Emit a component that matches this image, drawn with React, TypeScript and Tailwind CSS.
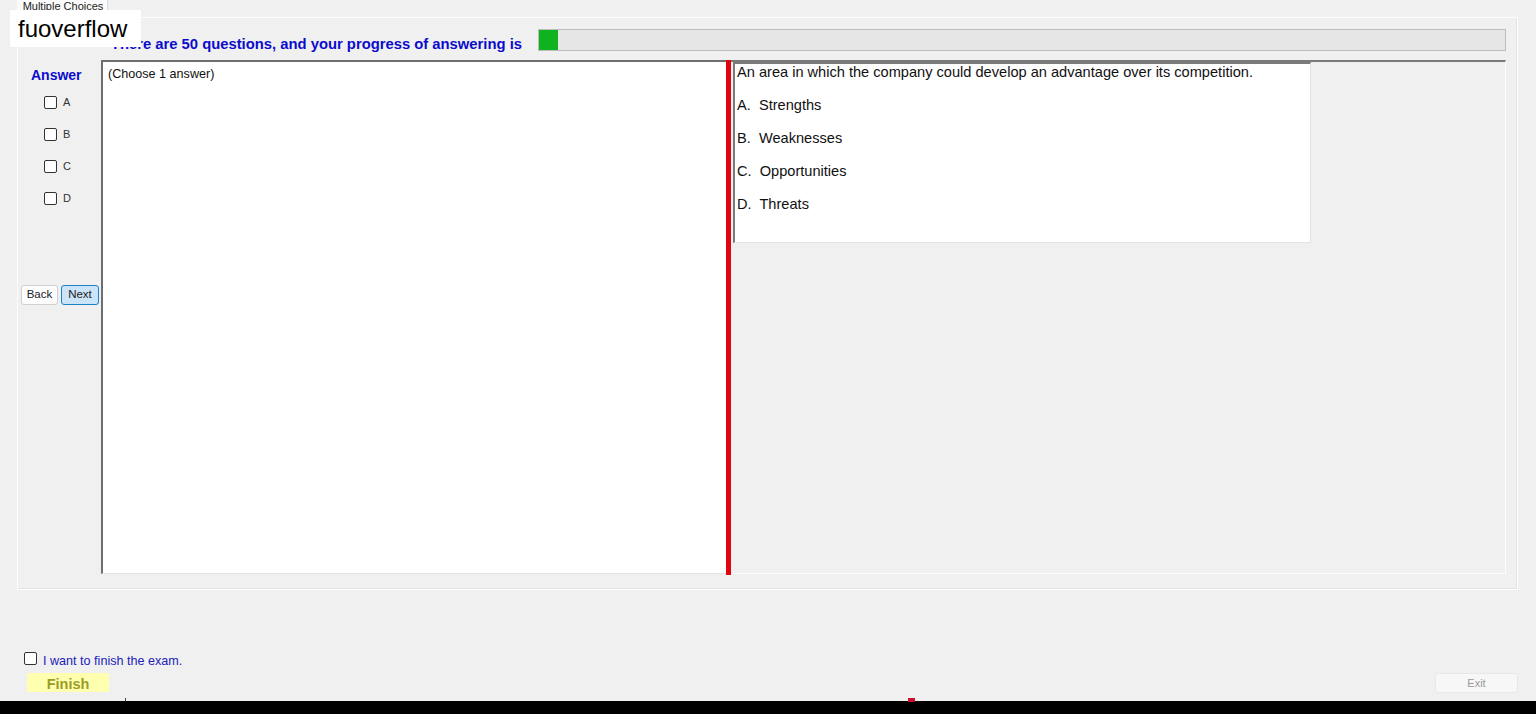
import React from 'react';

const options = [
  { key: 'A', text: 'Strengths' },
  { key: 'B', text: 'Weaknesses' },
  { key: 'C', text: 'Opportunities' },
  { key: 'D', text: 'Threats' },
];

// Plain Win-forms style checkbox box
const Box = () => (
  <span className="inline-block h-[13px] w-[13px] shrink-0 rounded-[2px] border border-[#333333] bg-white" />
);

const App: React.FC = () => {
  return (
    <div
      className="relative flex h-[714px] w-[1536px] flex-col overflow-hidden bg-[#f0f0f0] text-black"
      style={{ fontFamily: '"Liberation Sans", Arial, sans-serif' }}
    >
      {/* tab header */}
      <div className="ml-[17px] flex h-[17px] w-[91px] items-start justify-center border-r border-[#d9d9d9] bg-[#fbfbfb] pl-[2px] text-[11px] leading-[13px] text-[#222]">
        Multiple Choices
      </div>

      {/* tab page */}
      <div className="ml-[17px] flex h-[573px] w-[1501px] flex-col border border-[#fdfdfd] shadow-[inset_-1px_-1px_0_#e3e3e3]">
        {/* progress header */}
        <div className="mt-[11px] flex h-[22px] items-end">
          <div className="w-[520px] whitespace-nowrap pr-[16px] text-right text-[14.8px] font-bold leading-[14px] text-[#0c0ccc]">
            There are 50 questions, and your progress of answering is
          </div>
          <div className="flex h-[22px] w-[968px] border border-[#bcbcbc] bg-[#e6e6e6]">
            <div className="h-full w-[19px] bg-[#0fb21f]" />
          </div>
        </div>

        {/* content */}
        <div className="mt-[9px] flex h-[514px]">
          {/* answer column */}
          <div className="ml-[3px] flex w-[80px] flex-col">
            <div className="ml-[10px] mt-[7px] text-[14px] font-bold leading-[16px] text-[#0c0ccc]">Answer</div>
            <div className="ml-[23px] mt-[13px] flex flex-col gap-[19px]">
              {options.map((o) => (
                <div key={o.key} className="flex h-[13px] items-center gap-[6px] text-[11px] text-[#333]">
                  <Box />
                  <span>{o.key}</span>
                </div>
              ))}
            </div>
            <div className="mt-[80px] flex gap-[3px]">
              <button className="h-[20px] w-[37px] rounded-[3px] border border-[#d0d0d0] bg-[#fdfdfd] text-[11.5px] text-[#222]">
                Back
              </button>
              <button className="h-[20px] w-[38px] rounded-[3px] border border-[#1c7fc8] bg-[#cce4f7] text-[11.5px] text-[#222]">
                Next
              </button>
            </div>
          </div>

          {/* answer text box */}
          <div className="h-[514px] w-[625px] border-l-2 border-t-2 border-b border-l-[#6e6e6e] border-t-[#6e6e6e] border-b-[#e3e3e3] bg-white pl-[5px] pt-[5px] text-[12.6px] leading-[14px] text-[#111]">
            (Choose 1 answer)
          </div>

          {/* splitter */}
          <div className="h-[515px] w-[5px] bg-[#e0060e]" />

          {/* question panel */}
          <div className="flex h-[514px] w-[775px] flex-col border-t-2 border-r border-b border-t-[#7a7a7a] border-r-[#fdfdfd] border-b-[#fdfdfd]">
            <div className="ml-[2px] h-[181px] w-[578px] border-l-2 border-t-2 border-r border-b border-l-[#7a7a7a] border-t-[#7a7a7a] border-r-[#e3e3e3] border-b-[#e3e3e3] bg-white pl-[2px] text-[14.6px] leading-[17px] text-[#111]">
              <div>An area in which the company could develop an advantage over its competition.</div>
              <div className="mt-[16px] flex flex-col gap-[16px]">
                {options.map((o) => (
                  <div key={o.key} className="whitespace-pre">
                    {o.key}.  {o.text}
                  </div>
                ))}
              </div>
            </div>
          </div>
        </div>
      </div>

      {/* bottom area */}
      <div className="ml-[24px] mt-[62px] flex h-[13px] items-center gap-[6px]">
        <Box />
        <span className="translate-y-[2px] text-[12.6px] leading-[14px] text-[#2222bb]">I want to finish the exam.</span>
      </div>
      <div className="mt-[8px] flex items-start justify-between pr-[18px]">
        <button className="ml-[27px] h-[19px] w-[82px] rounded-[2px] bg-[#ffffb0] pt-[3px] text-[14.5px] font-bold leading-[17px] text-[#9c9c22]">
          Finish
        </button>
        <button className="h-[20px] w-[83px] rounded-[3px] border border-[#e8e8e8] bg-[#f7f7f7] text-[11px] text-[#9a9a9a]">
          Exit
        </button>
      </div>

      {/* taskbar edge */}
      <div className="relative mt-auto h-[13px] w-full bg-black">
        <div className="absolute left-[125px] top-[-3px] h-[3px] w-[1px] bg-[#444]" />
        <div className="absolute left-[908px] top-[-3px] h-[4px] w-[7px] bg-[#c8102e]" />
      </div>

      {/* watermark */}
      <div className="absolute left-[10px] top-[10px] flex h-[37px] w-[131px] items-center bg-white pl-[8px] text-[24px] leading-[28px] text-black">
        fuoverflow
      </div>
    </div>
  );
};

export default App;
